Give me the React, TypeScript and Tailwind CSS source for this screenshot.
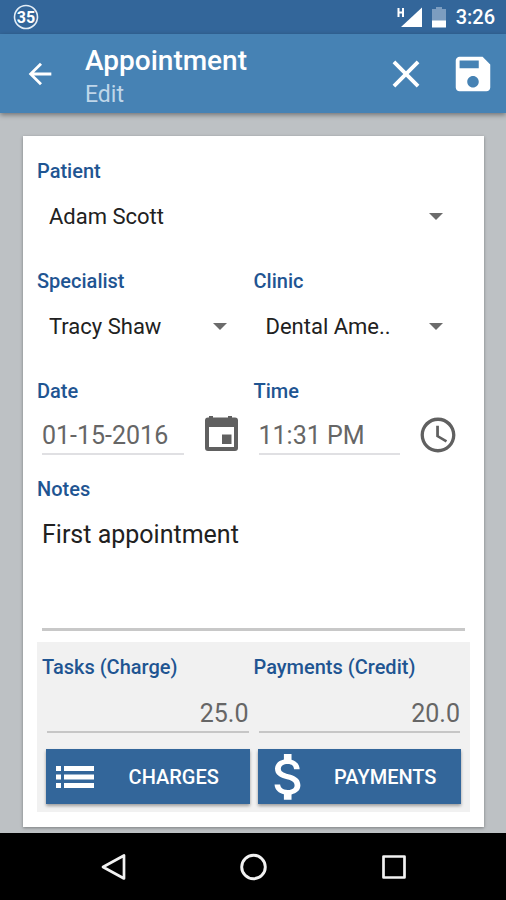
import { useState } from "react";
import type { ReactNode } from "react";

const labelClass = "block text-[20px] leading-6 font-medium text-[#1f5592]";
const lineInputClass =
  "h-10 min-w-0 bg-transparent border-b-2 px-0 pt-[3px] text-[25px] leading-8 text-[#666666] outline-none";

function Icon({ className, children }: { className: string; children: ReactNode }) {
  return (
    <svg viewBox="0 0 24 24" fill="currentColor" aria-hidden="true" className={className}>
      {children}
    </svg>
  );
}

function StatusBar() {
  return (
    <div className="flex h-[34px] items-center justify-between bg-[#33669a] pr-[11px] pl-[13px] text-white">
      <svg viewBox="0 0 26 26" className="size-[26px]" aria-hidden="true">
        <circle cx="13" cy="13" r="11.5" fill="none" stroke="#e3edf6" strokeWidth="1.6" />
        <text x="13" y="18.5" textAnchor="middle" fill="#fff" className="font-['Roboto'] text-[16px] font-bold">
          35
        </text>
      </svg>
      <div className="flex items-center gap-[10px]">
        <svg viewBox="0 0 26 22" className="h-[22px] w-[26px]" aria-hidden="true">
          <path d="M26 1.500V21H5Z" fill="#fff" />
          <path d="M2.500 2V11M7 2V11M2.500 6.500H7" stroke="#fff" strokeWidth="2" fill="none" />
        </svg>
        <svg viewBox="0 0 14 22" className="h-[22px] w-[14px]" aria-hidden="true">
          <path d="M4 1H10V3H14V21H0V3H4Z" fill="#7c9dc0" />
          <path d="M0 14.500H14V21.500H0Z" fill="#fff" />
        </svg>
        <span className="text-[20px] leading-6 font-medium">3:26</span>
      </div>
    </div>
  );
}

function Header() {
  return (
    <header className="relative flex h-[79px] items-center bg-[#4682b4] pl-[23px] text-white shadow-[0_2px_5px_rgba(0,0,0,0.4)]">
      <button type="button" aria-label="Back" className="mr-7">
        <Icon className="size-[34px]">
          <path d="M20 11H7.830l5.590-5.590L12 4l-8 8 8 8 1.410-1.410L7.830 13H20v-2z" />
        </Icon>
      </button>
      <div className="min-w-0 flex-1 pt-[7px]">
        <h1 className="text-[28px] leading-9 font-medium">Appointment</h1>
        <p className="text-[23px] leading-8 text-[#bfd6e9]">Edit</p>
      </div>
      <button type="button" aria-label="Cancel" className="flex w-[67px] justify-center">
        <Icon className="size-[46px]">
          <path d="M19 6.410L17.590 5 12 10.590 6.410 5 5 6.410 10.590 12 5 17.590 6.410 19 12 13.410 17.590 19 19 17.590 13.410 12z" />
        </Icon>
      </button>
      <button type="button" aria-label="Save" className="flex w-[67px] justify-center">
        <Icon className="size-[46px]">
          <path d="M17 3H5c-1.110 0-2 .9-2 2v14c0 1.100.89 2 2 2h14c1.100 0 2-.9 2-2V7l-4-4zm-5 16c-1.660 0-3-1.340-3-3s1.340-3 3-3 3 1.340 3 3-1.340 3-3 3zm3-10H5V5h10v4z" />
        </Icon>
      </button>
    </header>
  );
}

function SelectField({ id, label, options }: { id: string; label: string; options: string[] }) {
  return (
    <div className="mb-5">
      <label htmlFor={id} className={labelClass}>
        {label}
      </label>
      <div className="grid h-[66px] items-center">
        <select
          id={id}
          className="col-start-1 row-start-1 h-12 w-full appearance-none bg-transparent pr-12 pl-3 text-[22px] text-[#212121] outline-none"
        >
          {options.map((o) => (
            <option key={o}>{o}</option>
          ))}
        </select>
        <svg
          viewBox="0 0 14 7"
          aria-hidden="true"
          className="pointer-events-none col-start-1 row-start-1 mr-[27px] h-[7px] w-[14px] justify-self-end"
        >
          <path d="M0 0H14L7 7Z" fill="#6b6b6b" />
        </svg>
      </div>
    </div>
  );
}

function PickerField({
  id,
  label,
  initial,
  action,
  children,
}: {
  id: string;
  label: string;
  initial: string;
  action: string;
  children: ReactNode;
}) {
  const [value, setValue] = useState(initial);
  return (
    <div>
      <label htmlFor={id} className={labelClass}>
        {label}
      </label>
      <div className="flex h-16 items-center gap-4 pr-[10px] pl-[5px]">
        <input
          id={id}
          value={value}
          onChange={(e) => setValue(e.target.value)}
          className={`${lineInputClass} flex-1 border-[#e0e0e3]`}
        />
        <button type="button" aria-label={action} className="text-[#606060]">
          {children}
        </button>
      </div>
    </div>
  );
}

function AmountField({
  id,
  label,
  initial,
  button,
  children,
}: {
  id: string;
  label: string;
  initial: string;
  button: string;
  children: ReactNode;
}) {
  const [value, setValue] = useState(initial);
  return (
    <div>
      <label htmlFor={id} className={labelClass}>
        {label}
      </label>
      <div className="px-[5px] pt-[14px]">
        <input
          id={id}
          value={value}
          onChange={(e) => setValue(e.target.value)}
          className={`${lineInputClass} w-full border-[#c6c6c6] text-right`}
        />
      </div>
      <div className="px-1 pt-4">
        <button
          type="button"
          className="flex h-[55px] w-full items-center bg-[#33669a] pl-2 text-white shadow-[0_2px_3px_rgba(0,0,0,0.35)]"
        >
          {children}
          <span className="flex-1 text-center text-[20px] leading-6 font-medium">{button}</span>
        </button>
      </div>
    </div>
  );
}

function NavBar() {
  return (
    <nav className="flex h-[67px] items-center justify-center bg-black text-[#f2f2f2]">
      <button type="button" aria-label="Back" className="flex w-[140px] justify-center">
        <svg viewBox="0 0 28 28" className="size-7" fill="none" stroke="currentColor" strokeWidth="2.700" strokeLinejoin="round">
          <path d="M25 2.500V25.500L4 14Z" />
        </svg>
      </button>
      <button type="button" aria-label="Home" className="flex w-[140px] justify-center">
        <svg viewBox="0 0 28 28" className="size-7" fill="none" stroke="currentColor" strokeWidth="2.900">
          <circle cx="14.500" cy="14" r="11.800" />
        </svg>
      </button>
      <button type="button" aria-label="Recent apps" className="flex w-[140px] justify-center">
        <svg viewBox="0 0 28 28" className="size-7" fill="none" stroke="currentColor" strokeWidth="2.700" strokeLinejoin="round">
          <path d="M4.500 3.500H25.500V24.500H4.500Z" />
        </svg>
      </button>
    </nav>
  );
}

export default function App() {
  const [notes, setNotes] = useState("First appointment");
  return (
    <div className="flex min-h-screen flex-col bg-[#bdc1c4] font-['Roboto',sans-serif]">
      <StatusBar />
      <Header />
      <main className="flex-1 pt-[23px] pr-[22px] pb-[6px] pl-[23px]">
        <form className="bg-white px-[14px] pt-[23px] pb-[15px] shadow-[0_1px_3px_rgba(0,0,0,0.35)]">
          <SelectField id="patient" label="Patient" options={["Adam Scott"]} />
          <div className="grid grid-cols-2">
            <SelectField id="specialist" label="Specialist" options={["Tracy Shaw"]} />
            <SelectField id="clinic" label="Clinic" options={["Dental Ame.."]} />
          </div>
          <div className="grid grid-cols-2">
            <PickerField id="date" label="Date" initial="01-15-2016" action="Pick date">
              <svg viewBox="0 0 44 44" className="size-11" aria-hidden="true">
                <path d="M9 3H13V7H9ZM28 3H32V7H28Z" fill="currentColor" />
                <path
                  fillRule="evenodd"
                  d="M8 4.500H35a3 3 0 0 1 3 3V35a3 3 0 0 1-3 3H8a3 3 0 0 1-3-3V7.500a3 3 0 0 1 3-3ZM9 14V34H34V14Z"
                  fill="currentColor"
                />
                <path d="M22 21.500H31.500V31H22Z" fill="currentColor" />
              </svg>
            </PickerField>
            <PickerField id="time" label="Time" initial="11:31 PM" action="Pick time">
              <Icon className="size-11">
                <path d="M11.990 2.500C6.750 2.500 2.500 6.750 2.500 12s4.250 9.500 9.490 9.500C17.240 21.500 21.500 17.250 21.500 12S17.240 2.500 11.990 2.500zM12 19.700c-4.250 0-7.700-3.450-7.700-7.700s3.450-7.700 7.700-7.700 7.700 3.450 7.700 7.700-3.450 7.700-7.700 7.700zm.5-12.700H11v6l5.250 3.150.75-1.230-4.500-2.670z" />
              </Icon>
            </PickerField>
          </div>
          <label htmlFor="notes" className={`${labelClass} mt-[10px]`}>
            Notes
          </label>
          <div className="px-[5px]">
            <textarea
              id="notes"
              value={notes}
              onChange={(e) => setNotes(e.target.value)}
              className="block h-[130px] w-full resize-none border-b-[3px] border-[#c8c8c8] bg-transparent pt-[18px] text-[25px] leading-8 text-[#212121] outline-none"
            />
          </div>
          <section className="mt-[11px] grid grid-cols-2 bg-[#f1f1f1] px-[5px] pt-[13px] pb-2">
            <AmountField id="charge" label="Tasks (Charge)" initial="25.0" button="CHARGES">
              <svg viewBox="0 0 44 44" className="size-11" fill="currentColor" aria-hidden="true">
                <path d="M2 11H7V16H2ZM10 11H40V16H10ZM2 19.500H7V24.500H2ZM10 19.500H40V24.500H10ZM2 28H7V33H2ZM10 28H40V33H10Z" />
              </svg>
            </AmountField>
            <AmountField id="credit" label="Payments (Credit)" initial="20.0" button="PAYMENTS">
              <svg viewBox="0 0 44 48" className="h-12 w-11" fill="currentColor" aria-hidden="true">
                <path
                  transform="translate(-7.500 -6.500) scale(2.540)"
                  d="M11.800 10.900c-2.270-.59-3-1.200-3-2.150 0-1.090 1.010-1.850 2.700-1.850 1.780 0 2.440.85 2.500 2.100h2.210c-.07-1.720-1.120-3.300-3.210-3.810V3h-3v2.160c-1.940.42-3.500 1.680-3.500 3.610 0 2.310 1.910 3.460 4.700 4.130 2.500.6 3 1.480 3 2.410 0 .69-.49 1.790-2.700 1.790-2.060 0-2.870-.92-2.980-2.100h-2.200c.12 2.190 1.760 3.420 3.680 3.830V21h3v-2.150c1.950-.37 3.500-1.500 3.500-3.550 0-2.840-2.430-3.810-4.700-4.400z"
                />
              </svg>
            </AmountField>
          </section>
        </form>
      </main>
      <NavBar />
    </div>
  );
}
